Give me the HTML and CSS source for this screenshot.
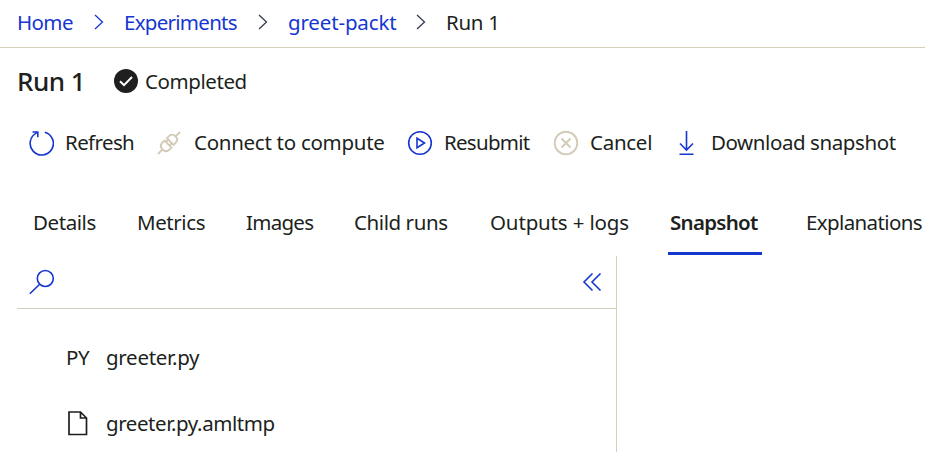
FILE: index.html
```
<!DOCTYPE html>
<html lang="en">
<head>
<meta charset="utf-8">
<title>Run 1</title>
<link rel="stylesheet" href="styles.css">
</head>
<body>
<nav class="breadcrumb">
  <a class="ls-6">Home</a>
  <svg class="sep" width="10" height="16" viewBox="0 0 10 16"><path d="M1 1l7.500 7L1 15"/></svg>
  <a class="ls-7">Experiments</a>
  <svg class="sep sep-dark" width="10" height="16" viewBox="0 0 10 16"><path d="M1 1l7.500 7L1 15"/></svg>
  <a class="ls-2">greet-packt</a>
  <svg class="sep sep-dark" width="10" height="16" viewBox="0 0 10 16"><path d="M1 1l7.500 7L1 15"/></svg>
  <span class="ls-3">Run 1</span>
</nav>
<header class="heading">
  <h1>Run 1</h1>
  <svg width="26" height="26" viewBox="0 0 26 26"><circle cx="13" cy="13" r="12" fill="#201f20"/><path d="M7 13.200l4 4 8-8.200" fill="none" stroke="#fff" stroke-width="2"/></svg>
  <span class="ls-4">Completed</span>
</header>
<div class="toolbar">
  <svg width="26" height="26" viewBox="0 0 26 26" class="blue"><path d="M16.800 2.200A11.600 11.600 0 1 1 8.800 2.900M4.500 2h5.300v5.200"/></svg>
  <span class="ls-6">Refresh</span>
  <svg width="26" height="26" viewBox="0 0 26 26" class="muted"><path d="M2 24l4.800-4.800M18.800 7.200L24 2"/><path d="M6.500 19.500c-2.600-2.700-1.800-5.200.2-7.300l1.800-1.700 7 7-1.800 1.800c-2.100 2-4.800 2.600-7.200.2zM10.800 8.300l1.900-1.900c2-2 4.600-2.500 6.800-.3s1.800 5-.2 7l-1.800 1.800z"/><path d="M10 12l3-3M13.500 15.500l3-3"/></svg>
  <span class="ls-3">Connect to compute</span>
  <svg width="26" height="26" viewBox="0 0 26 26" class="blue"><circle cx="13" cy="13" r="11.300"/><path d="M10 8.300l7.500 4.700-7.500 4.700z"/></svg>
  <span class="ls-7">Resubmit</span>
  <svg width="26" height="26" viewBox="0 0 26 26" class="muted"><circle cx="13" cy="13" r="11.300"/><path d="M8.500 8.500l9 9M17.500 8.500l-9 9"/></svg>
  <span class="ls-3">Cancel</span>
  <svg width="26" height="26" viewBox="0 0 26 26" class="blue"><path d="M13.500 1v19M7 13.500l6.500 6.500 6.500-6.500M6.500 24.300h14"/></svg>
  <span class="ls-4">Download snapshot</span>
</div>
<nav class="tabs">
  <a class="ls-4">Details</a>
  <a class="ls-4">Metrics</a>
  <a class="ls-7">Images</a>
  <a class="ls-4">Child runs</a>
  <a class="ls-2">Outputs + logs</a>
  <a class="active">Snapshot</a>
  <a class="ls-6">Explanations</a>
</nav>
<main class="panel">
  <div class="search">
    <svg width="26" height="26" viewBox="0 0 26 26" class="blue"><circle cx="16.300" cy="9.500" r="8"/><path d="M10.700 15.200L.8 24.800"/></svg>
    <svg width="20" height="20" viewBox="0 0 20 20" class="blue"><path d="M10.500 1.500L2 10l8.500 8.500M18.500 1.500L10 10l8.500 8.500"/></svg>
  </div>
  <ul class="files">
    <li><span class="ls-4">PY</span><span class="ls-3">greeter.py</span></li>
    <li><svg width="22" height="26" viewBox="0 0 22 26"><path d="M3 2h11.500l6 6v16.500H3zM14.500 2v6h6" fill="none" stroke="#201f20" stroke-width="1.700"/></svg><span class="ls-4">greeter.py.amltmp</span></li>
  </ul>
</main>
</body>
</html>
```
FILE: styles.css
```
* { box-sizing: border-box; }
body {
  margin: 0;
  height: 452px;
  overflow: hidden;
  background: #fff;
  color: #201f20;
  font: 20.5px/28px "Noto Sans", "Open Sans", sans-serif;
  white-space: nowrap;
}
svg { display: block; flex: none; }
.ls-2 { letter-spacing: -0.15px; }
.ls-3 { letter-spacing: -0.28px; }
.ls-4 { letter-spacing: -0.42px; }
.ls-6 { letter-spacing: -0.62px; }
.ls-7 { letter-spacing: -0.72px; }

.breadcrumb {
  display: grid;
  grid-template-columns: 77px 30px 134px 30px 128px 30px auto;
  align-items: center;
  height: 48px;
  padding: 0 0 3px 17px;
  border-bottom: 1px solid #d3cfb8;
}
.breadcrumb a { color: #1637cf; }
.sep { fill: none; stroke: #1637cf; stroke-width: 1.3; }
.sep-dark { stroke: #343c50; }

.heading {
  display: grid;
  grid-template-columns: 96px 32px auto;
  align-items: center;
  height: 66px;
  padding-left: 17px;
}
.heading h1 {
  margin: 0;
  font-size: 26px;
  font-weight: 500;
  letter-spacing: -0.5px;
}

.toolbar {
  display: grid;
  grid-template-columns: 37px 91px 38px 213px 37px 109px 37px 83px 38px auto;
  align-items: center;
  height: 58px;
  padding-left: 28px;
}
.toolbar span { padding-bottom: 2px; }
.blue { fill: none; stroke: #1637cf; stroke-width: 1.6; }
.muted { fill: none; stroke: #d3cbb8; stroke-width: 1.9; }

.tabs {
  display: grid;
  grid-template-columns: 104px 109px 108px 136px 178px 138px auto;
  align-items: start;
  height: 84px;
  padding: 36px 0 0 33px;
}
.tabs .active {
  width: 94px;
  height: 47px;
  padding-left: 2px;
  border-bottom: 3px solid #1637cf;
  font-weight: 600;
  letter-spacing: -0.72px;
}

.panel {
  width: 617px;
  height: 196px;
  border-right: 1px solid #d3cfb8;
}
.search {
  display: flex;
  align-items: center;
  justify-content: space-between;
  height: 53px;
  margin-left: 17px;
  padding: 0 14px 0 12px;
  border-bottom: 1px solid #d3cfb8;
}
.files {
  margin: 0;
  padding: 15px 0 0 66px;
  list-style: none;
}
.files li {
  display: grid;
  grid-template-columns: 40px auto;
  align-items: center;
  height: 66px;
}
```
